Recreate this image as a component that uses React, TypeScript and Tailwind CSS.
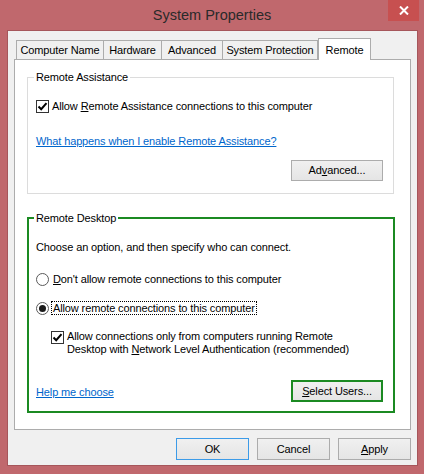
import React from "react";

function CheckBox() {
  return (
    <span className="w-[13px] h-[13px] border border-[#333333] bg-white flex items-center justify-center shrink-0">
      <svg width="11" height="11" viewBox="0 0 11 11">
        <path d="M1.5 5.5 L4.2 8.2 L9.5 2.2" stroke="#000" strokeWidth="2" fill="none" />
      </svg>
    </span>
  );
}

function Radio({ checked }: { checked?: boolean }) {
  return (
    <span className="w-[13px] h-[13px] rounded-full border border-[#5a5a5a] bg-white flex items-center justify-center shrink-0">
      {checked && <span className="w-[7px] h-[7px] rounded-full bg-[#1a1a1a]" />}
    </span>
  );
}

export default function App() {
  return (
    <div className="w-[424px] h-[474px] bg-[#c0686d] flex flex-col font-['Liberation_Sans',Arial,sans-serif] text-[11px] tracking-[-0.12px] text-black">
      {/* Title bar */}
      <div className="h-[30px] grid grid-cols-[1fr_auto_1fr] items-start shrink-0">
        <div />
        <div className="text-[14.5px] text-[#2a2a2a] pt-[6px] tracking-normal leading-[18px]">System Properties</div>
        <div className="flex justify-end pr-[5px]">
          <div className="w-[31px] h-[21px] bg-[#c75050] flex items-center justify-center">
            <svg width="10" height="9" viewBox="0 0 10 9">
              <path d="M1 0.5 L9 8.5 M9 0.5 L1 8.5" stroke="#fff" strokeWidth="2" />
            </svg>
          </div>
        </div>
      </div>

      {/* Content */}
      <div className="flex-1 ml-[7px] mr-[6px] mb-[8px] bg-[#f0f0f0] border border-[#a6565b] flex flex-col px-[6px] pt-[7px]">
        {/* Tabs */}
        <div className="flex items-end h-[21px] ml-[2px] relative z-10 shrink-0">
          <div className="w-[88px] h-[19px] border border-b-0 border-[#acacac] bg-[#f0f0f0] flex items-center justify-center">Computer Name</div>
          <div className="w-[58px] h-[19px] border border-b-0 border-l-0 border-[#acacac] bg-[#f0f0f0] flex items-center justify-center">Hardware</div>
          <div className="w-[61px] h-[19px] border border-b-0 border-l-0 border-[#acacac] bg-[#f0f0f0] flex items-center justify-center">Advanced</div>
          <div className="w-[95px] h-[19px] border border-b-0 border-l-0 border-[#acacac] bg-[#f0f0f0] flex items-center justify-center">System Protection</div>
          <div className="w-[53px] h-[22px] -mb-px border border-b-0 border-[#acacac] bg-white flex items-start justify-center pt-[3px]">Remote</div>
        </div>

        {/* Panel */}
        <div className="h-[371px] bg-white border border-[#acacac] pt-[10px] pl-[12px] flex flex-col shrink-0">
          {/* Remote Assistance */}
          <fieldset className="w-[367px] border border-[#dcdcdc] px-[8px] pb-[12px] flex flex-col">
            <legend className="px-[2px] -ml-[2px] leading-[14px]">Remote Assistance</legend>
            <div className="mt-[15px] h-[14px] flex items-center gap-[3px]">
              <CheckBox />
              <span>
                Allow <u>R</u>emote Assistance connections to this computer
              </span>
            </div>
            <div className="mt-[21px] leading-[14px]">
              <span className="text-[#0066cc] underline">What happens when I enable Remote Assistance?</span>
            </div>
            <div className="mt-[12px] flex justify-end">
              <button className="w-[92px] h-[21px] mr-[2px] border border-[#acacac] bg-linear-to-b from-[#f0f0f0] to-[#e5e5e5]">
                Ad<u>v</u>anced...
              </button>
            </div>
          </fieldset>

          {/* Remote Desktop */}
          <fieldset className="mt-[17px] w-[368px] border-2 border-[#1b8a22] pl-[7px] pr-[10px] pb-[9px] flex flex-col">
            <legend className="px-[2px] -ml-[2px] leading-[14px]">Remote Desktop</legend>
            <div className="mt-[15px] leading-[14px]">Choose an option, and then specify who can connect.</div>
            <div className="mt-[18px] h-[14px] flex items-center gap-[4px]">
              <Radio />
              <span>
                <u>D</u>on't allow remote connections to this computer
              </span>
            </div>
            <div className="mt-[15px] h-[14px] flex items-center gap-[2px]">
              <Radio checked />
              <span className="border border-dotted border-black px-[1px] leading-[12px]">
                Allow remote connections to this computer
              </span>
            </div>
            <div className="mt-[15px] ml-[15px] flex items-start gap-[3px]">
              <span className="mt-px">
                <CheckBox />
              </span>
              <span className="leading-[13px]">
                Allow connections only from computers running Remote
                <br />
                Desktop with <u>N</u>etwork Level Authentication (recommended)
              </span>
            </div>
            <div className="mt-[24px] flex items-center justify-between">
              <span className="text-[#0066cc] underline pt-[3px]">Help me choose</span>
              <button className="w-[92px] h-[22px] border-2 border-[#1b8a22] bg-linear-to-b from-[#f0f0f0] to-[#e5e5e5]">
                <u>S</u>elect Users...
              </button>
            </div>
          </fieldset>
        </div>

        {/* Bottom buttons */}
        <div className="mt-[8px] flex justify-end gap-[8px]">
          <button className="w-[73px] h-[22px] border border-[#3c9be8] bg-linear-to-b from-[#f0f0f0] to-[#e5e5e5]">OK</button>
          <button className="w-[73px] h-[22px] border border-[#acacac] bg-linear-to-b from-[#f0f0f0] to-[#e5e5e5]">Cancel</button>
          <button className="w-[73px] h-[22px] border border-[#acacac] bg-linear-to-b from-[#f0f0f0] to-[#e5e5e5]">
            <u>A</u>pply
          </button>
        </div>
      </div>
    </div>
  );
}
